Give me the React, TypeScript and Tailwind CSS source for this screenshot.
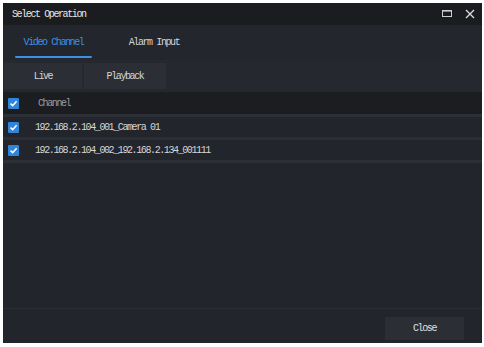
import React from 'react'

const font = { fontFamily: '"Liberation Mono", "DejaVu Sans Mono", monospace' }

const Check: React.FC = () => (
  <div className="w-[11px] h-[11px] rounded-[1px] bg-[#2f84dc] flex items-center justify-center shrink-0">
    <svg width="9" height="9" viewBox="0 0 9 9">
      <path d="M1.5 4.6 L3.7 6.7 L7.6 2.3" fill="none" stroke="#fff" strokeWidth="1.6" />
    </svg>
  </div>
)

const rows = ['192.168.2.104_001_Camera 01', '192.168.2.104_002_192.168.2.134_001111']

export default function App() {
  return (
    <div className="w-[484px] h-[347px] bg-white pt-[3px] pl-[3px]">
      <div
        className="w-[479px] h-[340px] flex flex-col bg-[#22252b] text-[10px] tracking-[-1.4px] text-[#d6d6d6]"
        style={font}
      >
        {/* title bar */}
        <div className="h-[22px] bg-[#1b1c1f] flex items-center pl-[9px] pr-[7px]">
          <span className="flex-1 text-[#e8e8e8]">Select Operation</span>
          <svg width="10" height="8" viewBox="0 0 10 8" className="mr-[13px]">
            <rect x="0.5" y="0.5" width="9" height="6" fill="none" stroke="#cfcfcf" strokeWidth="1" />
            <line x1="0" y1="1" x2="10" y2="1" stroke="#cfcfcf" strokeWidth="1.2" />
          </svg>
          <svg width="10" height="10" viewBox="0 0 10 10">
            <path d="M1 1 L9 9 M9 1 L1 9" stroke="#dedede" strokeWidth="1.3" />
          </svg>
        </div>

        {/* tabs */}
        <div className="h-[35px] bg-[#23262c] flex items-stretch pl-[12px]">
          <div className="relative w-[77px] flex items-center justify-center text-[#3c91e6]">
            Video Channel
            <div className="absolute left-0 right-0 bottom-[2px] h-[2px] rounded-full bg-[#3c91e6]" />
          </div>
          <div className="w-[124px] flex items-center justify-center">Alarm Input</div>
        </div>

        {/* toolbar */}
        <div className="h-[32px] bg-[#25282e] flex items-start pt-[3px] pl-[1px] gap-[2px]">
          <button className="w-[78px] h-[26px] bg-[#2b2e34] text-[#d6d6d6]">Live</button>
          <button className="w-[82px] h-[26px] bg-[#2b2e34] text-[#d6d6d6]">Playback</button>
        </div>

        {/* table */}
        <div className="flex-1 flex flex-col">
          <div className="h-[25px] bg-[#1b1d20] flex items-center pl-[5px] pt-[1px] border-b-[3px] border-[#2c2f35]">
            <Check />
            <span className="ml-[19px] text-[#9c9c9c]">Channel</span>
          </div>
          {rows.map((r) => (
            <div key={r} className="h-[23px] flex items-center pl-[5px] pt-[1px] border-b-[3px] border-[#2c2f35]">
              <Check />
              <span className="ml-[16px]">{r}</span>
            </div>
          ))}
        </div>

        {/* footer */}
        <div className="h-[35px] border-t border-[#2c2f35] flex items-start justify-end pt-[8px] pr-[18px]">
          <button className="w-[79px] h-[23px] bg-[#2b2e34] text-[#e0e0e0]">Close</button>
        </div>
      </div>
    </div>
  )
}
